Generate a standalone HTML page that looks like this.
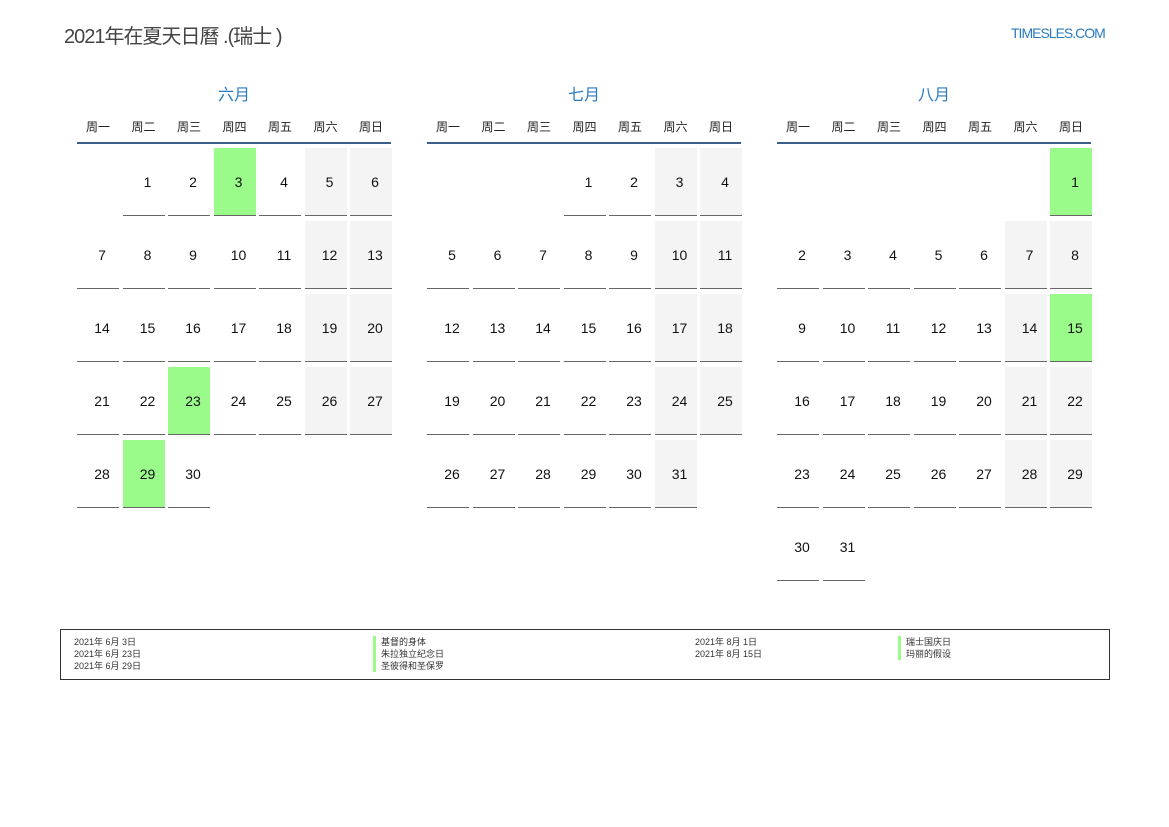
<!DOCTYPE html>
<html><head><meta charset="utf-8"><style>
*{margin:0;padding:0;box-sizing:border-box}
body{width:1169px;height:827px;background:#fff;position:relative;font-family:"Liberation Sans","Noto Sans CJK SC",sans-serif;overflow:hidden}
.title{position:absolute;left:64px;top:20px;font-size:20px;color:#444;letter-spacing:-1px}
.site{position:absolute;left:1011px;top:25px;font-size:14px;color:#2a7ac0;letter-spacing:-1px}
.month{position:absolute;top:84px;width:314px}
.mname{text-align:center;font-size:16px;color:#2a7ac0;height:24px;line-height:24px}
.wd{display:grid;grid-template-columns:repeat(7,42px);column-gap:3.5px;font-size:12px;color:#222;margin-top:10px;height:24px}
.wd div{text-align:center}
.line{height:2px;background:#3a5f8a;margin-top:0px}
.grid{display:grid;grid-template-columns:repeat(7,42px);grid-auto-rows:68px;column-gap:3.5px;row-gap:5px;margin-top:4px}
.grid div{font-size:14px;color:#111;display:flex;align-items:center;justify-content:center;padding-left:8px}
.d{border-bottom:1.5px solid #666}
.w{background:#f4f4f4}
.g{background:#9afb8a}
.legend{position:absolute;left:60px;top:629px;width:1050px;height:51px;border:1px solid #333;font-size:9px;color:#333}
.legend .c{position:absolute;top:6px;line-height:12px}
.bar{border-left:3px solid #9afb8a;padding-left:5px}
</style></head><body>
<div class="title">2021年在夏天日曆 .(瑞士 )</div>
<div class="site">TIMESLES.COM</div>

<div class="month" style="left:77px">
<div class="mname">六月</div>
<div class="wd"><div>周一</div><div>周二</div><div>周三</div><div>周四</div><div>周五</div><div>周六</div><div>周日</div></div>
<div class="line"></div>
<div class="grid">
<div></div><div class="d">1</div><div class="d">2</div><div class="d g">3</div><div class="d">4</div><div class="d w">5</div><div class="d w">6</div>
<div class="d">7</div><div class="d">8</div><div class="d">9</div><div class="d">10</div><div class="d">11</div><div class="d w">12</div><div class="d w">13</div>
<div class="d">14</div><div class="d">15</div><div class="d">16</div><div class="d">17</div><div class="d">18</div><div class="d w">19</div><div class="d w">20</div>
<div class="d">21</div><div class="d">22</div><div class="d g">23</div><div class="d">24</div><div class="d">25</div><div class="d w">26</div><div class="d w">27</div>
<div class="d">28</div><div class="d g">29</div><div class="d">30</div>
</div></div>

<div class="month" style="left:427px">
<div class="mname">七月</div>
<div class="wd"><div>周一</div><div>周二</div><div>周三</div><div>周四</div><div>周五</div><div>周六</div><div>周日</div></div>
<div class="line"></div>
<div class="grid">
<div></div><div></div><div></div><div class="d">1</div><div class="d">2</div><div class="d w">3</div><div class="d w">4</div>
<div class="d">5</div><div class="d">6</div><div class="d">7</div><div class="d">8</div><div class="d">9</div><div class="d w">10</div><div class="d w">11</div>
<div class="d">12</div><div class="d">13</div><div class="d">14</div><div class="d">15</div><div class="d">16</div><div class="d w">17</div><div class="d w">18</div>
<div class="d">19</div><div class="d">20</div><div class="d">21</div><div class="d">22</div><div class="d">23</div><div class="d w">24</div><div class="d w">25</div>
<div class="d">26</div><div class="d">27</div><div class="d">28</div><div class="d">29</div><div class="d">30</div><div class="d w">31</div>
</div></div>

<div class="month" style="left:777px">
<div class="mname">八月</div>
<div class="wd"><div>周一</div><div>周二</div><div>周三</div><div>周四</div><div>周五</div><div>周六</div><div>周日</div></div>
<div class="line"></div>
<div class="grid">
<div></div><div></div><div></div><div></div><div></div><div></div><div class="d g">1</div>
<div class="d">2</div><div class="d">3</div><div class="d">4</div><div class="d">5</div><div class="d">6</div><div class="d w">7</div><div class="d w">8</div>
<div class="d">9</div><div class="d">10</div><div class="d">11</div><div class="d">12</div><div class="d">13</div><div class="d w">14</div><div class="d g">15</div>
<div class="d">16</div><div class="d">17</div><div class="d">18</div><div class="d">19</div><div class="d">20</div><div class="d w">21</div><div class="d w">22</div>
<div class="d">23</div><div class="d">24</div><div class="d">25</div><div class="d">26</div><div class="d">27</div><div class="d w">28</div><div class="d w">29</div>
<div class="d">30</div><div class="d">31</div>
</div></div>

<div class="legend">
<div class="c" style="left:13px">2021年 6月 3日<br>2021年 6月 23日<br>2021年 6月 29日</div>
<div class="c" style="left:312px"><div class="bar">基督的身体</div><div class="bar">朱拉独立纪念日</div><div class="bar">圣彼得和圣保罗</div></div>
<div class="c" style="left:634px">2021年 8月 1日<br>2021年 8月 15日</div>
<div class="c" style="left:837px"><div class="bar">瑞士国庆日</div><div class="bar">玛丽的假设</div></div>
</div>
</body></html>
